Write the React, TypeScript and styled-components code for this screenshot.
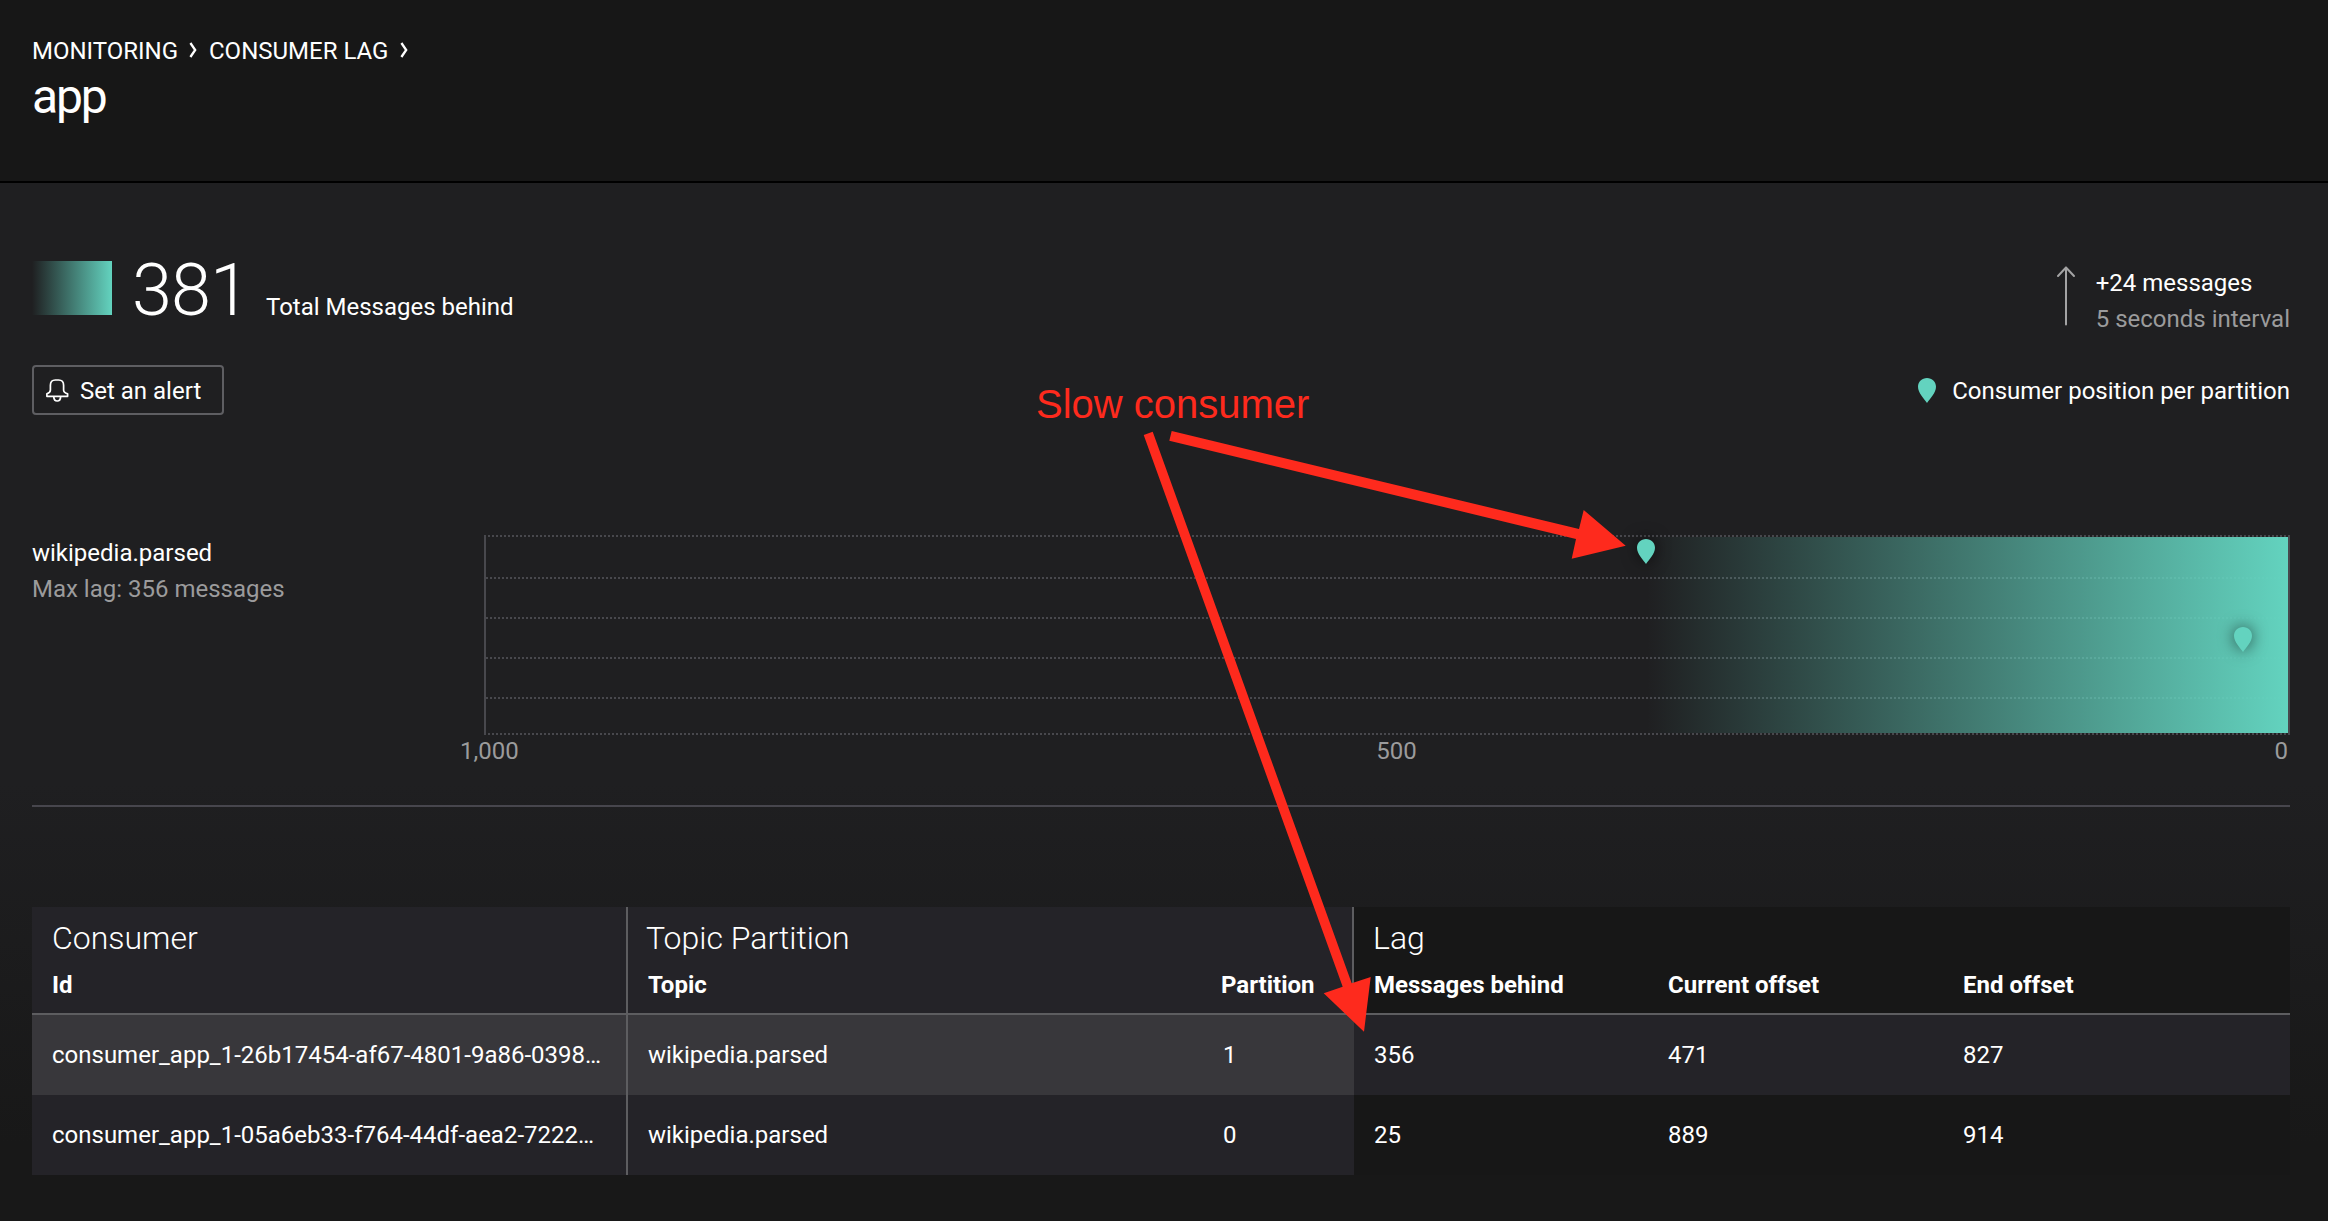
import React from 'react';
import styled, { createGlobalStyle } from 'styled-components';

const teal = '#63d3bf';
const red = '#fe2a1d';

const GlobalStyle = createGlobalStyle`
  * { box-sizing: border-box; }
  body {
    margin: 0;
    background: #181818;
    color: #fff;
    font-family: Roboto, "Liberation Sans", sans-serif;
    font-size: 24px;
    line-height: 36px;
    -webkit-font-smoothing: antialiased;
  }
`;

const Page = styled.div`
  position: relative;
  width: 2328px;
  height: 1221px;
  overflow: hidden;
  display: flex;
  flex-direction: column;
`;

const Header = styled.header`
  height: 183px;
  padding: 33px 32px 0;
  background: #171717;
  border-bottom: 2px solid #000;
`;

const Breadcrumbs = styled.nav`
  display: flex;
  align-items: center;
`;

const Crumb = styled.span<{ $width: number }>`
  width: ${(p) => p.$width}px;
  white-space: nowrap;
`;

const Chevron = styled.svg`
  width: 8px;
  height: 16px;
  margin: -2px 12px 0 0;
`;

const Title = styled.h1`
  margin: 0;
  font-size: 48px;
  line-height: 56px;
  font-weight: 400;
  letter-spacing: -2.2px;
`;

const Main = styled.main`
  flex: 1;
  padding: 78px 38px 0 32px;
  background: linear-gradient(#1f1f21 0, #1f1f21 600px, #181818 960px, #181818 100%);
`;

const SummaryRow = styled.div`
  display: flex;
  justify-content: space-between;
  height: 104px;
`;

const Total = styled.div`
  display: flex;
  align-items: baseline;
  height: 54px;
`;

const Swatch = styled.div`
  width: 80px;
  height: 54px;
  background: linear-gradient(90deg, #1f1f21, ${teal});
`;

const TotalNumber = styled.div`
  width: 135px;
  padding-left: 20px;
  font-size: 72px;
  line-height: 54px;
  font-weight: 300;
  letter-spacing: -1px;
`;

const TotalLabel = styled.div`
  margin-left: 19px;
  line-height: 24px;
`;

const Trend = styled.div`
  display: flex;
  padding-top: 4px;
`;

const TrendArrow = styled.svg`
  width: 20px;
  height: 60px;
  margin: 1px 20px 0 0;
`;

const Line = styled.div<{ $muted?: boolean }>`
  color: ${(p) => (p.$muted ? '#9b9b9c' : '#fff')};
  white-space: nowrap;
`;

const ControlRow = styled.div`
  display: flex;
  justify-content: space-between;
  align-items: center;
  height: 50px;
`;

const AlertButton = styled.button`
  display: flex;
  align-items: center;
  width: 192px;
  height: 50px;
  padding: 0 0 0 11px;
  border: 2px solid #5e5e62;
  border-radius: 4px;
  background: transparent;
  color: #fff;
  font: inherit;
`;

const BellIcon = styled.svg`
  width: 26px;
  height: 28px;
  margin-right: 9px;
`;

const ButtonText = styled.span`
  padding-top: 2px;
`;

const Legend = styled.div`
  display: flex;
  align-items: center;
`;

const PinIcon = styled.svg`
  display: block;
  width: 18px;
  height: 25px;
`;

const LegendText = styled.span`
  margin: 2px 0 0 16px;
`;

const LagSection = styled.section`
  display: flex;
  height: 272px;
  margin-top: 120px;
  border-bottom: 2px solid #47464d;
`;

const TopicInfo = styled.div`
  width: 452px;
`;

const Chart = styled.div`
  flex: 1;
`;

const dots = (color: string) =>
  `repeating-linear-gradient(90deg, ${color} 0, ${color} 2px, transparent 2px, transparent 4px)`;

const DottedEdge = styled.div`
  height: 2px;
  background: ${dots('#48484d')};
`;

const Plot = styled.div`
  position: relative;
  display: flex;
  flex-direction: column;
  height: 196px;
  border: solid #48484d;
  border-width: 0 2px;
`;

const LagFill = styled.div`
  position: absolute;
  inset: 0 0 0 auto;
  background: linear-gradient(90deg, rgba(99, 211, 191, 0), ${teal});
`;

const GridBand = styled.div`
  height: 40px;
  background: ${dots('#48484d')} bottom / 100% 2px no-repeat;
  &:first-child { height: 42px; }
`;

const PlotPin = styled.div`
  position: absolute;
  margin-left: -9px;
  filter: drop-shadow(0 0 8px rgba(0, 0, 0, 0.6));
`;

const Axis = styled.div`
  display: flex;
  justify-content: space-between;
  margin: 2px 2px 0 -24px;
  line-height: 28px;
  color: #9b9b9c;
`;

const Table = styled.div`
  margin-top: 100px;
`;

const Row = styled.div<{ $height: number }>`
  display: grid;
  grid-template-columns: 596px 572px 154px 294px 295px 1fr;
  height: ${(p) => p.$height}px;
`;

const TableHead = styled.div`
  border-bottom: 2px solid #5d5d60;
`;

const GroupCell = styled.div<{ $span: number; $bg: string; $ruled?: boolean; $left: number }>`
  grid-column: span ${(p) => p.$span};
  padding: 11px 0 0 ${(p) => p.$left}px;
  background: ${(p) => p.$bg};
  border-right: ${(p) => (p.$ruled ? '2px solid #5d5d60' : '0')};
  font-size: 32px;
  line-height: 40px;
  font-weight: 300;
`;

const HeadCell = styled.div<{ $bg: string; $ruled?: boolean; $left?: number }>`
  padding: 2px 0 0 ${(p) => p.$left ?? 20}px;
  background: ${(p) => p.$bg};
  border-right: ${(p) => (p.$ruled ? '2px solid #5d5d60' : '0')};
  font-weight: 700;
  white-space: nowrap;
`;

const Cell = styled.div<{ $bg: string; $ruled?: boolean; $left?: number }>`
  padding: 0 20px 0 ${(p) => p.$left ?? 20}px;
  background: ${(p) => p.$bg};
  border-right: ${(p) => (p.$ruled ? '2px solid #5d5d60' : '0')};
  line-height: 80px;
  white-space: nowrap;
  overflow: hidden;
`;

const Note = styled.div`
  position: absolute;
  left: 1036px;
  top: 381px;
  font-family: "Liberation Sans", Arial, sans-serif;
  font-size: 40px;
  line-height: 46px;
  white-space: nowrap;
  color: ${red};
`;

const NoteArrows = styled.svg`
  position: absolute;
  left: 0;
  top: 0;
`;

const Pin = () => (
  <PinIcon viewBox="0 0 18 25">
    <path d="M9 0C4 0 0 3.8 0 8.8C0 15 6 20.5 9 25C12 20.5 18 15 18 8.8C18 3.8 14 0 9 0Z" fill={teal} />
  </PinIcon>
);

const CrumbChevron = () => (
  <Chevron viewBox="0 0 8 16" fill="none" stroke="#fff" strokeWidth="2.3">
    <path d="M1.4 1L6.2 8L1.4 15" />
  </Chevron>
);

const max = 1000;
const pins = [
  { lag: 356, top: 2 },
  { lag: 25, top: 90 },
];

const rows = [
  { id: 'consumer_app_1-26b17454-af67-4801-9a86-0398…', topic: 'wikipedia.parsed', partition: 1, behind: 356, current: 471, end: 827 },
  { id: 'consumer_app_1-05a6eb33-f764-44df-aea2-7222…', topic: 'wikipedia.parsed', partition: 0, behind: 25, current: 889, end: 914 },
];

const shade = '#242328';
const dark = '#171717';

export default function App() {
  return (
    <Page>
      <GlobalStyle />
      <Header>
        <Breadcrumbs>
          <Crumb $width={157}>MONITORING</Crumb>
          <CrumbChevron />
          <Crumb $width={191}>CONSUMER LAG</Crumb>
          <CrumbChevron />
        </Breadcrumbs>
        <Title>app</Title>
      </Header>
      <Main>
        <SummaryRow>
          <Total>
            <Swatch />
            <TotalNumber>381</TotalNumber>
            <TotalLabel>Total Messages behind</TotalLabel>
          </Total>
          <Trend>
            <TrendArrow viewBox="0 0 20 60" fill="none" stroke="#a3a3a4" strokeWidth="2" strokeLinecap="round" strokeLinejoin="round">
              <path d="M10 58.5V1.5M2 10L10 1.5L18 10" />
            </TrendArrow>
            <div>
              <Line>+24 messages</Line>
              <Line $muted>5 seconds interval</Line>
            </div>
          </Trend>
        </SummaryRow>
        <ControlRow>
          <AlertButton>
            <BellIcon viewBox="0 0 26 28" fill="none" stroke="#fff" strokeWidth="1.7" strokeLinejoin="round">
              <path d="M1.9 20.3V17.9Q5.4 16.6 5.4 14V9.2Q5.4 4 10.4 4H13.6Q18.6 4 18.6 9.2V14Q18.6 16.6 22.6 17.9V20.3ZM8.7 20.6C8.9 23.8 10.3 25 12.2 25C14.1 25 15.5 23.8 15.7 20.6" />
            </BellIcon>
            <ButtonText>Set an alert</ButtonText>
          </AlertButton>
          <Legend>
            <Pin />
            <LegendText>Consumer position per partition</LegendText>
          </Legend>
        </ControlRow>
        <LagSection>
          <TopicInfo>
            <Line>wikipedia.parsed</Line>
            <Line $muted>Max lag: 356 messages</Line>
          </TopicInfo>
          <Chart>
            <DottedEdge />
            <Plot>
              <GridBand />
              <GridBand />
              <GridBand />
              <GridBand />
              <LagFill style={{ width: `${(pins[0].lag / max) * 100}%` }} />
              {pins.map((pin) => (
                <PlotPin key={pin.lag} style={{ left: `${100 - (pin.lag / max) * 100}%`, top: pin.top }}>
                  <Pin />
                </PlotPin>
              ))}
            </Plot>
            <DottedEdge />
            <Axis>
              <span>1,000</span>
              <span>500</span>
              <span>0</span>
            </Axis>
          </Chart>
        </LagSection>
        <Table>
          <TableHead>
            <Row $height={58}>
              <GroupCell $span={1} $bg={shade} $left={20} $ruled>Consumer</GroupCell>
              <GroupCell $span={2} $bg={shade} $left={18} $ruled>Topic Partition</GroupCell>
              <GroupCell $span={3} $bg={dark} $left={19}>Lag</GroupCell>
            </Row>
            <Row $height={48}>
              <HeadCell $bg={shade} $ruled>Id</HeadCell>
              <HeadCell $bg={shade}>Topic</HeadCell>
              <HeadCell $bg={shade} $left={21} $ruled>Partition</HeadCell>
              <HeadCell $bg={dark}>Messages behind</HeadCell>
              <HeadCell $bg={dark}>Current offset</HeadCell>
              <HeadCell $bg={dark}>End offset</HeadCell>
            </Row>
          </TableHead>
          {rows.map((row, i) => {
            const left = i % 2 === 0 ? '#38373b' : shade;
            const right = i % 2 === 0 ? shade : dark;
            return (
              <Row key={row.id} $height={80}>
                <Cell $bg={left} $ruled>{row.id}</Cell>
                <Cell $bg={left}>{row.topic}</Cell>
                <Cell $bg={left} $left={23}>{row.partition}</Cell>
                <Cell $bg={right}>{row.behind}</Cell>
                <Cell $bg={right}>{row.current}</Cell>
                <Cell $bg={right}>{row.end}</Cell>
              </Row>
            );
          })}
        </Table>
      </Main>
      <Note>Slow consumer</Note>
      <NoteArrows width="2328" height="1221" viewBox="0 0 2328 1221" fill={red}>
        <path d="M1171.7 431L1579 529L1583.7 510L1625.7 545.7L1571.7 558.7L1576 539L1169.3 440.7Z" />
        <path d="M1152.7 431.7L1351.7 983.3L1370.7 977L1364 1031.7L1323.7 993.3L1342.7 986.7L1143.7 435Z" />
      </NoteArrows>
    </Page>
  );
}
